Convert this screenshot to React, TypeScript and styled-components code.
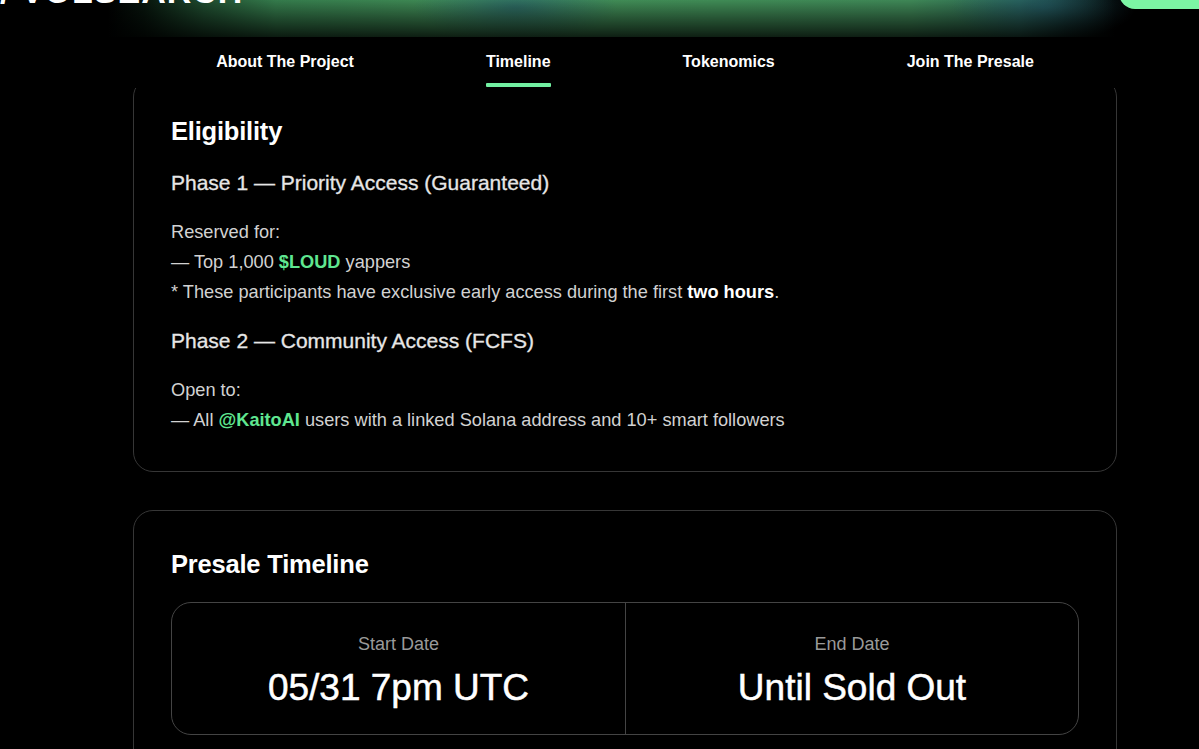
import React from 'react';
import styled, { createGlobalStyle } from 'styled-components';

const GlobalStyle = createGlobalStyle`
    html, body {
        margin: 0;
        padding: 0;
        background: #000;
        color: #fff;
        font-family: "Liberation Sans", Arial, sans-serif;
    }
    * {
        box-sizing: border-box;
    }
`

const tabs = ['About The Project', 'Timeline', 'Tokenomics', 'Join The Presale'];

const dates = [
    { label: 'Start Date', value: '05/31 7pm UTC' },
    { label: 'End Date', value: 'Until Sold Out' },
];

export default function App() {
    return <>
        <GlobalStyle />
        <Header>
            <Logo>/ VOLSEARCH</Logo>
            <HeaderButton>Connect</HeaderButton>
        </Header>

        <Column>
            <Nav>
                { tabs.map(tab => (
                    <Tab key={tab} active={tab === 'Timeline'}>{ tab }</Tab>
                )) }
            </Nav>

            <Card>
                <CardTitle>Eligibility</CardTitle>

                <PhaseTitle>Phase 1 — Priority Access (Guaranteed)</PhaseTitle>
                <Body>
                    Reserved for:<br />
                    — Top 1,000 <Accent>$LOUD</Accent> yappers<br />
                    * These participants have exclusive early access during the first <strong>two hours</strong>.
                </Body>

                <PhaseTitle>Phase 2 — Community Access (FCFS)</PhaseTitle>
                <Body>
                    Open to:<br />
                    — All <Accent>@KaitoAI</Accent> users with a linked Solana address and 10+ smart followers
                </Body>
            </Card>

            <Card>
                <CardTitle>Presale Timeline</CardTitle>
                <DateGrid>
                    { dates.map(d => (
                        <DateCell key={d.label}>
                            <DateLabel>{ d.label }</DateLabel>
                            <DateValue>{ d.value }</DateValue>
                        </DateCell>
                    )) }
                </DateGrid>
            </Card>
        </Column>
    </>;
}

// glow band behind the logo, fades out at both ends and toward the bottom
const Header = styled.header`
    height: 37px;
    overflow: hidden;
    display: flex;
    justify-content: space-between;
    align-items: flex-start;
    background:
        linear-gradient(to bottom, rgba(0, 0, 0, 0) 0%, rgba(0, 0, 0, 0.4) 50%, rgba(0, 0, 0, 0.78) 100%),
        radial-gradient(ellipse 10% 110% at 43% 20%, rgba(36, 92, 104, 0.7), transparent 85%),
        radial-gradient(ellipse 9% 110% at 87% 20%, rgba(36, 92, 104, 0.75), transparent 85%),
        linear-gradient(to right, #000 9%, #07140c 12%, #1e4a2e 17%, #347a4b 23%, #418c56 40%, #3f8a55 60%, #3e8656 76%, #2b6552 85%, #102620 89%, #000 93%);
`

const Logo = styled.div`
    margin-top: -26px;
    font-size: 34px;
    line-height: 34px;
    font-weight: 700;
    letter-spacing: 1px;
    color: #fff;
    white-space: nowrap;
`

const HeaderButton = styled.button`
    margin-top: -40px;
    margin-right: -30px;
    width: 110px;
    height: 49px;
    border: none;
    border-radius: 16px;
    background: #7cf5a4;
    color: #000;
    font-family: inherit;
    font-weight: 700;
    font-size: 15px;
`

const Column = styled.main`
    width: 984px;
    margin-left: 133px;
    display: flex;
    flex-direction: column;
    gap: 38px;
`

const Nav = styled.nav`
    position: relative;
    z-index: 2;
    height: 51px;
    margin-bottom: -49px;
    display: flex;
    justify-content: center;
    gap: 132px;
    padding-top: 15px;
    background: #000;
`

const Tab = styled.a<{ active?: boolean }>`
    display: flex;
    flex-direction: column;
    align-items: stretch;
    gap: 11px;
    font-size: 16px;
    line-height: 20px;
    font-weight: 700;
    color: #fff;
    cursor: pointer;

    &::after {
        content: '';
        height: 4px;
        border-radius: 1px;
        background: ${p => p.active ? '#72f0a2' : 'transparent'};
    }
`

const Card = styled.section`
    padding: 37px 37px 36px 37px;
    border: 1px solid #363636;
    border-radius: 20px;
    background: #000;
`

const CardTitle = styled.h2`
    margin: 0 0 22px;
    font-size: 25.5px;
    line-height: 32px;
    font-weight: 700;
    letter-spacing: -0.2px;
    color: #fff;
`

const PhaseTitle = styled.h3`
    margin: 0 0 20px;
    font-size: 21px;
    line-height: 28px;
    font-weight: 400;
    color: #e6e6e6;
    -webkit-text-stroke: 0.3px #e6e6e6;
`

const Body = styled.p`
    margin: 0 0 20px;
    font-size: 18.2px;
    line-height: 30px;
    color: #d2d2d2;

    &:last-child {
        margin-bottom: 0;
    }

    strong {
        color: #fff;
        font-weight: 700;
    }
`

const Accent = styled.span`
    color: #5fe690;
    font-weight: 700;
`

const DateGrid = styled.div`
    display: grid;
    grid-template-columns: 1fr 1fr;
    border: 1px solid #444;
    border-radius: 20px;
`

const DateCell = styled.div`
    display: flex;
    flex-direction: column;
    align-items: center;
    gap: 9px;
    padding: 28px 0 24px;

    & + & {
        border-left: 1px solid #444;
    }
`

const DateLabel = styled.div`
    font-size: 18px;
    line-height: 26px;
    color: #9a9a9a;
`

const DateValue = styled.div`
    font-size: 37px;
    line-height: 44px;
    color: #fff;
    -webkit-text-stroke: 0.5px #fff;
`
